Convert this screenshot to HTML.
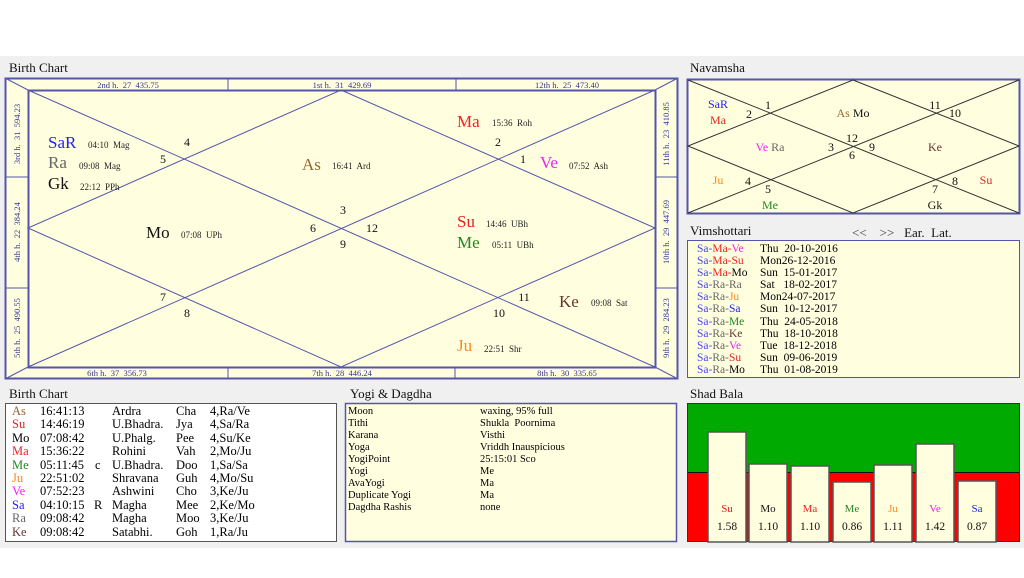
<!DOCTYPE html>
<html><head><meta charset="utf-8"><style>
body{margin:0;width:1024px;height:578px;background:#fff;position:relative;overflow:hidden;font-family:"Liberation Serif",serif;}
.bg{position:absolute;left:0;top:56px;width:1024px;height:492px;background:#f0f0f0;}
.t{position:absolute;font-size:13px;color:#111;}
svg text{font-family:"Liberation Serif",serif;white-space:pre;}
.vim{position:absolute;left:697px;top:243px;font-size:11.5px;line-height:12.1px;}
.vim div{position:relative;height:12.1px;white-space:nowrap;}
.vim b{font-weight:normal;position:absolute;left:63px;}
.bc{position:absolute;left:12px;top:405px;font-size:12.5px;line-height:13.4px;}
.bc div{position:relative;height:13.4px;}
.bc span{position:absolute;white-space:nowrap;}
.yg{position:absolute;left:348px;top:406px;font-size:10.5px;line-height:12px;}
.yg div{position:relative;height:12px;}
.yg span{position:absolute;white-space:pre;}
</style></head><body>
<div class="bg"></div>
<div class="t" style="left:9px;top:60px">Birth Chart</div>
<div class="t" style="left:690px;top:60px">Navamsha</div>
<div class="t" style="left:690px;top:223px">Vimshottari</div>
<div class="t" style="left:852px;top:225px;color:#333">&lt;&lt;&nbsp;&nbsp;&nbsp;&nbsp;&gt;&gt;&nbsp;&nbsp;&nbsp;<span style="color:#111">Ear.&nbsp;&nbsp;Lat.</span></div>
<div class="t" style="left:9px;top:386px">Birth Chart</div>
<div class="t" style="left:350px;top:386px">Yogi &amp; Dagdha</div>
<div class="t" style="left:690px;top:386px">Shad Bala</div>

<svg style="position:absolute;left:0;top:0" width="1024" height="578">
<g stroke="#5555aa" fill="none">
<rect x="5.5" y="78.5" width="672" height="300" fill="#ffffe0" stroke-width="2"/>
<rect x="28.5" y="90.5" width="627" height="277" stroke-width="2"/>
<line x1="5" y1="78" x2="28" y2="90"/><line x1="678" y1="78" x2="655" y2="90"/>
<line x1="5" y1="379" x2="28" y2="367"/><line x1="678" y1="379" x2="655" y2="367"/>
<line x1="228" y1="79" x2="228" y2="90"/><line x1="456" y1="79" x2="456" y2="90"/>
<line x1="228" y1="367" x2="228" y2="378"/><line x1="455" y1="367" x2="455" y2="378"/>
<line x1="6" y1="177" x2="28" y2="177"/><line x1="6" y1="288" x2="28" y2="288"/>
<line x1="655" y1="177" x2="677" y2="177"/><line x1="655" y1="288" x2="677" y2="288"/>
<line x1="28" y1="90" x2="655" y2="367"/><line x1="655" y1="90" x2="28" y2="367"/>
<polygon points="341,90 655,228 341,367 28,228"/>
</g>
<g font-size="8.5" fill="#333399" text-anchor="middle">
<text x="128" y="88">2nd h.  27  435.75</text>
<text x="342" y="88">1st h.  31  429.69</text>
<text x="567" y="88">12th h.  25  473.40</text>
<text x="117" y="376">6th h.  37  356.73</text>
<text x="342" y="376">7th h.  28  446.24</text>
<text x="567" y="376">8th h.  30  335.65</text>
<text transform="translate(20,134) rotate(-90)">3rd h.  31  594.23</text>
<text transform="translate(20,232) rotate(-90)">4th h.  22  384.24</text>
<text transform="translate(20,328) rotate(-90)">5th h.  25  490.55</text>
<text transform="translate(669,134) rotate(-90)">11th h.  23  410.85</text>
<text transform="translate(669,232) rotate(-90)">10th h.  29  447.69</text>
<text transform="translate(669,328) rotate(-90)">9th h.  29  284.23</text>
</g>
<g font-size="12" fill="#111" text-anchor="middle">
<text x="187" y="146">4</text><text x="163" y="163">5</text>
<text x="498" y="146">2</text><text x="523" y="163">1</text>
<text x="343" y="214">3</text><text x="313" y="232">6</text><text x="372" y="232">12</text><text x="343" y="248">9</text>
<text x="163" y="301">7</text><text x="187" y="317">8</text>
<text x="524" y="301">11</text><text x="499" y="317">10</text>
</g>
<g font-size="17">
<text x="48" y="148" fill="#2222ee">SaR</text><text x="48" y="168" fill="#666">Ra</text><text x="48" y="189" fill="#111">Gk</text>
<text x="302" y="170" fill="#996633">As</text>
<text x="146" y="238" fill="#111">Mo</text>
<text x="457" y="127" fill="#ee2222">Ma</text>
<text x="540" y="168" fill="#ee22ee">Ve</text>
<text x="457" y="227" fill="#dd2222">Su</text><text x="457" y="248" fill="#228822">Me</text>
<text x="559" y="307" fill="#663333">Ke</text>
<text x="457" y="351" fill="#ff8822">Ju</text>
</g>
<g font-size="9" fill="#222">
<text x="88" y="148">04:10  Mag</text><text x="79" y="169">09:08  Mag</text><text x="80" y="190">22:12  PPh</text>
<text x="332" y="169">16:41  Ard</text><text x="181" y="238">07:08  UPh</text>
<text x="492" y="126">15:36  Roh</text><text x="569" y="169">07:52  Ash</text>
<text x="486" y="227">14:46  UBh</text><text x="492" y="248">05:11  UBh</text>
<text x="591" y="306">09:08  Sat</text><text x="484" y="352">22:51  Shr</text>
</g>

<!-- Navamsha -->
<rect x="687.5" y="79.5" width="332" height="134" fill="#ffffe0" stroke="#5555aa" stroke-width="2"/>
<g stroke="#333" fill="none">
<line x1="688" y1="80" x2="1019" y2="213"/><line x1="1019" y1="80" x2="688" y2="213"/>
<polygon points="853,80 1019,146 853,213 688,146"/>
</g>
<g font-size="12" text-anchor="middle">
<text x="768" y="109" fill="#111">1</text><text x="749" y="118" fill="#111">2</text>
<text x="935" y="109" fill="#111">11</text><text x="955" y="117" fill="#111">10</text>
<text x="852" y="142" fill="#111">12</text><text x="831" y="151" fill="#111">3</text><text x="872" y="151" fill="#111">9</text><text x="852" y="159" fill="#111">6</text>
<text x="748" y="185" fill="#111">4</text><text x="768" y="193" fill="#111">5</text>
<text x="935" y="193" fill="#111">7</text><text x="955" y="185" fill="#111">8</text>
<text x="718" y="108" fill="#2222ee">SaR</text><text x="718" y="124" fill="#ee2222">Ma</text>
<text x="853" y="117"><tspan fill="#996633">As</tspan><tspan fill="#111"> Mo</tspan></text>
<text x="770" y="151"><tspan fill="#ee22ee">Ve</tspan><tspan fill="#666"> Ra</tspan></text>
<text x="935" y="151" fill="#663333">Ke</text>
<text x="718" y="184" fill="#ff8822">Ju</text><text x="986" y="184" fill="#dd2222">Su</text>
<text x="770" y="209" fill="#228822">Me</text><text x="935" y="209" fill="#111">Gk</text>
</g>

<rect x="687.5" y="240.5" width="332" height="137" fill="#ffffe0" stroke="#5555aa"/>
<rect x="5.5" y="403.5" width="331" height="138" fill="#fff" stroke="#555"/>
<rect x="345.5" y="403.5" width="331" height="138" fill="#ffffe0" stroke="#5555aa" stroke-width="1.5"/>
<rect x="687" y="404" width="333" height="69" fill="#00aa00"/>
<rect x="687" y="473" width="333" height="69" fill="#ff0000"/>
<line x1="687" y1="472.5" x2="1020" y2="472.5" stroke="#111"/>
<rect x="687.5" y="403.5" width="332" height="138" fill="none" stroke="#333"/>
<g fill="#ffffe0" stroke="#555" stroke-width="1.5">
<rect x="708" y="432" width="38" height="110"/>
<rect x="749" y="464" width="38" height="78"/>
<rect x="791" y="466" width="38" height="76"/>
<rect x="833" y="482" width="38" height="60"/>
<rect x="874" y="465" width="38" height="77"/>
<rect x="916" y="444" width="38" height="98"/>
<rect x="958" y="481" width="38" height="61"/>
</g>
<g font-size="11" text-anchor="middle">
<text x="727" y="512" fill="#dd2222">Su</text><text x="768" y="512" fill="#111">Mo</text><text x="810" y="512" fill="#ee2222">Ma</text>
<text x="852" y="512" fill="#228822">Me</text><text x="893" y="512" fill="#ff8822">Ju</text><text x="935" y="512" fill="#ee22ee">Ve</text><text x="977" y="512" fill="#2222ee">Sa</text>
<g font-size="11.5" fill="#111">
<text x="727" y="530">1.58</text><text x="768" y="530">1.10</text><text x="810" y="530">1.10</text><text x="852" y="530">0.86</text><text x="893" y="530">1.11</text><text x="935" y="530">1.42</text><text x="977" y="530">0.87</text>
</g></g>
</svg>

<div class="vim">
<div><span style="color:#4444ee">Sa-</span><span style="color:#ee2222">Ma-</span><span style="color:#ee22ee">Ve</span><b>Thu&nbsp;&nbsp;20-10-2016</b></div>
<div><span style="color:#4444ee">Sa-</span><span style="color:#ee2222">Ma-Su</span><b>Mon26-12-2016</b></div>
<div><span style="color:#4444ee">Sa-</span><span style="color:#ee2222">Ma-</span>Mo<b>Sun&nbsp;&nbsp;15-01-2017</b></div>
<div><span style="color:#4444ee">Sa-</span><span style="color:#666">Ra-Ra</span><b>Sat&nbsp;&nbsp;&nbsp;18-02-2017</b></div>
<div><span style="color:#4444ee">Sa-</span><span style="color:#666">Ra-</span><span style="color:#ff8822">Ju</span><b>Mon24-07-2017</b></div>
<div><span style="color:#4444ee">Sa-</span><span style="color:#666">Ra-</span><span style="color:#2222ee">Sa</span><b>Sun&nbsp;&nbsp;10-12-2017</b></div>
<div><span style="color:#4444ee">Sa-</span><span style="color:#666">Ra-</span><span style="color:#228822">Me</span><b>Thu&nbsp;&nbsp;24-05-2018</b></div>
<div><span style="color:#4444ee">Sa-</span><span style="color:#666">Ra-</span><span style="color:#663333">Ke</span><b>Thu&nbsp;&nbsp;18-10-2018</b></div>
<div><span style="color:#4444ee">Sa-</span><span style="color:#666">Ra-</span><span style="color:#ee22ee">Ve</span><b>Tue&nbsp;&nbsp;18-12-2018</b></div>
<div><span style="color:#4444ee">Sa-</span><span style="color:#666">Ra-</span><span style="color:#dd2222">Su</span><b>Sun&nbsp;&nbsp;09-06-2019</b></div>
<div><span style="color:#4444ee">Sa-</span><span style="color:#666">Ra-</span>Mo<b>Thu&nbsp;&nbsp;01-08-2019</b></div>
</div>

<div class="bc">
<div><span style="color:#996633">As</span><span style="left:28px">16:41:13</span><span style="left:100px">Ardra</span><span style="left:164px">Cha</span><span style="left:198px">4,Ra/Ve</span></div>
<div><span style="color:#dd2222">Su</span><span style="left:28px">14:46:19</span><span style="left:100px">U.Bhadra.</span><span style="left:164px">Jya</span><span style="left:198px">4,Sa/Ra</span></div>
<div><span>Mo</span><span style="left:28px">07:08:42</span><span style="left:100px">U.Phalg.</span><span style="left:164px">Pee</span><span style="left:198px">4,Su/Ke</span></div>
<div><span style="color:#ee2222">Ma</span><span style="left:28px">15:36:22</span><span style="left:100px">Rohini</span><span style="left:164px">Vah</span><span style="left:198px">2,Mo/Ju</span></div>
<div><span style="color:#228822">Me</span><span style="left:28px">05:11:45</span><span style="left:83px">c</span><span style="left:100px">U.Bhadra.</span><span style="left:164px">Doo</span><span style="left:198px">1,Sa/Sa</span></div>
<div><span style="color:#ff8822">Ju</span><span style="left:28px">22:51:02</span><span style="left:100px">Shravana</span><span style="left:164px">Guh</span><span style="left:198px">4,Mo/Su</span></div>
<div><span style="color:#ee22ee">Ve</span><span style="left:28px">07:52:23</span><span style="left:100px">Ashwini</span><span style="left:164px">Cho</span><span style="left:198px">3,Ke/Ju</span></div>
<div><span style="color:#2222ee">Sa</span><span style="left:28px">04:10:15</span><span style="left:82px">R</span><span style="left:100px">Magha</span><span style="left:164px">Mee</span><span style="left:198px">2,Ke/Mo</span></div>
<div><span style="color:#666">Ra</span><span style="left:28px">09:08:42</span><span style="left:100px">Magha</span><span style="left:164px">Moo</span><span style="left:198px">3,Ke/Ju</span></div>
<div><span style="color:#663333">Ke</span><span style="left:28px">09:08:42</span><span style="left:100px">Satabhi.</span><span style="left:164px">Goh</span><span style="left:198px">1,Ra/Ju</span></div>
</div>

<div class="yg">
<div><span>Moon</span><span style="left:132px">waxing, 95% full</span></div>
<div><span>Tithi</span><span style="left:132px">Shukla  Poornima</span></div>
<div><span>Karana</span><span style="left:132px">Visthi</span></div>
<div><span>Yoga</span><span style="left:132px">Vriddh Inauspicious</span></div>
<div><span>YogiPoint</span><span style="left:132px">25:15:01 Sco</span></div>
<div><span>Yogi</span><span style="left:132px">Me</span></div>
<div><span>AvaYogi</span><span style="left:132px">Ma</span></div>
<div><span>Duplicate Yogi</span><span style="left:132px">Ma</span></div>
<div><span>Dagdha Rashis</span><span style="left:132px">none</span></div>
</div>
</body></html>
